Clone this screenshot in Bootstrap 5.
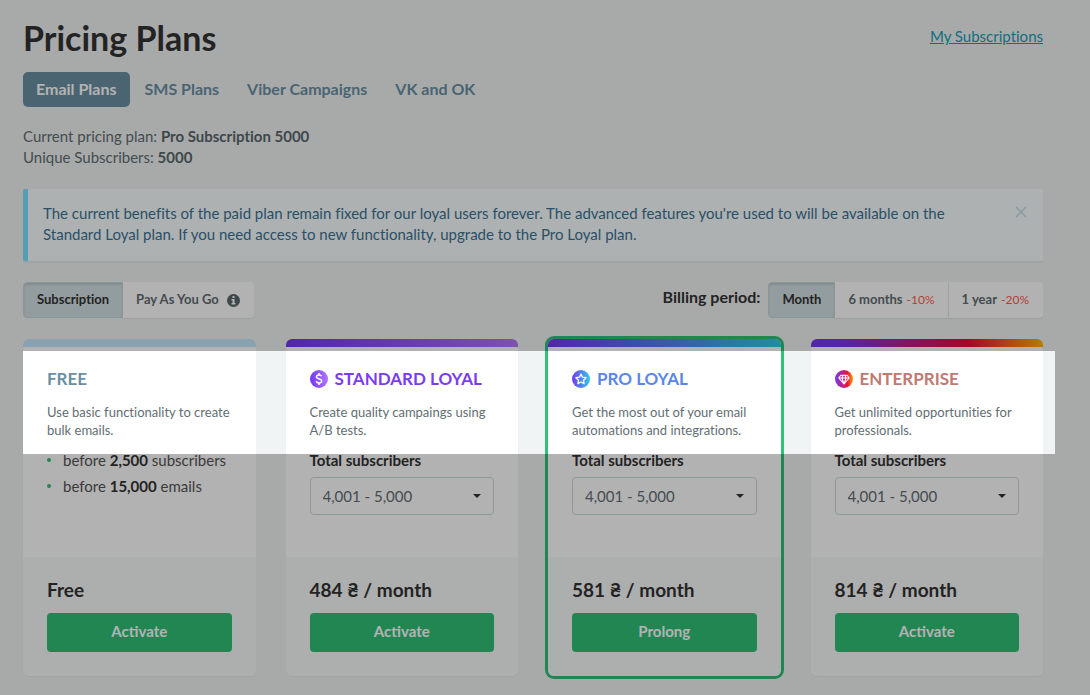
<!DOCTYPE html>
<html lang="en">
<head>
<meta charset="utf-8">
<meta name="viewport" content="width=device-width, initial-scale=1">
<title>Pricing Plans</title>
<link href="https://cdn.jsdelivr.net/npm/bootstrap@5.3.0/dist/css/bootstrap.min.css" rel="stylesheet">
<style>
:root { --brand-green: #31c178; --ink: #333; --muted: #626e73; --steel: #6a90a3; }
body { min-height: 100vh; font-family: Lato, "DejaVu Sans", sans-serif; font-variant-ligatures: none; font-size: 15px; line-height: 21px; color: var(--muted); background: #f1f4f4; overflow-x: hidden; }
.page { padding: 18px 47px 20px 23px; }
h1 { font-size: 34px; line-height: 40px; font-weight: 700; color: var(--ink); }
.sub-link { color: #17a0b5; }
.plan-tabs { gap: 2px; margin-top: 14px; }
.plan-tabs .nav-link { height: 35px; padding: 6px 13px; font-size: 16px; font-weight: 700; color: var(--steel); border-radius: 5px; }
.plan-tabs .nav-link.active { background: var(--steel); color: #fff; }
.summary { margin-top: 19px; }
.summary b { color: #5a666b; }
.notice { margin: 21px 0; padding: 14px 15px 16px; border: 0; border-left: 5px solid #78e2ff; border-radius: 2px; background: #f9feff; color: #3c7394; box-shadow: 0 2px 0 #e6eaea; }
.notice p { max-width: 930px; }
.close-x { width: 14px; height: 14px; color: #c5dbe6; margin-top: 2px; }
.toggle .btn { height: 36px; padding: 0 13px; display: flex; align-items: center; gap: 4px; font-size: 13px; font-weight: 700; color: var(--muted); background: #fff; border: 1px solid #fff; border-radius: 4px; box-shadow: 0 1px 1px #e0e4e4; }
.toggle .btn + .btn-check + .btn { border-left-color: #e3e8e9; }
.toggle .btn-check:checked + .btn { background: #d3e0e3; color: var(--ink); border-color: #c8d7da; box-shadow: inset 0 2px 2px #bccbce; }
.toggle small { font-size: 12px; font-weight: 400; color: #ff5a4d; }
.period-label { font-size: 16px; color: var(--ink); font-weight: 700; }
.plans-area { margin-top: 21px; }
.plans { --bs-gutter-x: 30px; }
.plan { border: 0; border-radius: 6px; color: var(--muted); box-shadow: 0 1px 1px #e6eaea; min-height: 337px; }
.plan.current { box-shadow: 0 0 0 3px var(--brand-green); }
.stripe { height: 8px; border-radius: 6px 6px 0 0; }
.stripe-free { background: #c6e8fd; }
.stripe-standard { background: linear-gradient(90deg, #7438f4, #b077f9); }
.stripe-pro { background: linear-gradient(90deg, #7438f4, #32cae6); }
.stripe-enterprise { background: linear-gradient(90deg, #7438f4 10%, #ee0a38 68%, #ffb400); }
.plan .card-body { padding: 22px 24px; }
.plan h2 { font-size: 17px; line-height: 20px; font-weight: 700; margin: 0 0 14px; display: flex; align-items: center; gap: 7px; }
.plan h2 svg { width: 18px; height: 18px; }
.name-free { color: var(--steel); } .name-standard { color: #7a3cf0; } .name-pro { color: #5a86ea; } .name-enterprise { color: #c07a72; }
.blurb { font-size: 13px; line-height: 18px; margin: 0 0 11px; min-height: 36px; }
.plan .form-label { display: block; margin: 0 0 6px; font-size: 15px; color: var(--ink); font-weight: 700; }
.plan .form-select { height: 38px; padding: 0 34px 0 12px; font-size: 15px; color: var(--muted); border: 1px solid #c9dcdc; border-radius: 4px; background: #fff url("data:image/svg+xml,%3Csvg xmlns='http://www.w3.org/2000/svg' viewBox='0 0 8 4'%3E%3Cpath d='M0 0h8L4 4z' fill='%23333'/%3E%3C/svg%3E") no-repeat right 12px center / 8px 4px; }
.limits { list-style: none; margin: -3px 0 0; padding: 0; line-height: 26px; color: #555; }
.limits li { display: flex; align-items: center; gap: 12px; }
.limits li::before { content: ""; width: 4px; height: 4px; border-radius: 50%; background: var(--brand-green); }
.limits b { color: var(--ink); }
.plan .card-footer { border: 0; padding: 21px 24px 24px; background: #f8fafa; border-radius: 0 0 6px 6px; }
.price { font-size: 19px; line-height: 24px; font-weight: 700; color: var(--ink); margin: 0 0 11px; }
.btn-plan { height: 39px; padding: 0 0 2px; font-size: 15px; font-weight: 700; color: #fff; background: var(--brand-green); border: 0; border-radius: 4px; }
/* Onboarding spotlight: dims everything except the plan headings */
.spotlight { position: absolute; z-index: 10; top: 12px; left: 0; right: -12px; height: 103px; box-shadow: 0 0 0 4000px rgba(0,0,0,.3); pointer-events: none; }
</style>
<script src="https://cdn.jsdelivr.net/npm/bootstrap@5.3.0/dist/js/bootstrap.bundle.min.js"></script>
</head>
<body>
<main class="page">
  <header class="d-flex justify-content-between align-items-start">
    <h1 class="m-0">Pricing Plans</h1>
    <a class="sub-link mt-2" href="#">My Subscriptions</a>
  </header>
  <nav class="nav nav-pills plan-tabs">
    <a class="nav-link active" href="#" aria-current="page">Email Plans</a>
    <a class="nav-link" href="#">SMS Plans</a>
    <a class="nav-link" href="#">Viber Campaigns</a>
    <a class="nav-link" href="#">VK and OK</a>
  </nav>
  <div class="summary">
    <div>Current pricing plan: <b>Pro Subscription 5000</b></div>
    <div>Unique Subscribers: <b>5000</b></div>
  </div>
  <div class="alert notice d-flex justify-content-between" role="alert">
    <p class="m-0">The current benefits of the paid plan remain fixed for our loyal users forever. The advanced features you're used to will be available on the Standard Loyal plan. If you need access to new functionality, upgrade to the Pro Loyal plan.</p>
    <button type="button" class="btn p-0 border-0 d-flex close-x" data-bs-dismiss="alert" aria-label="Close"><svg width="14" height="14" viewBox="0 0 14 14" fill="none" stroke="currentColor" stroke-width="1.5"><path d="M2 2l10 10M12 2L2 12"/></svg></button>
  </div>
  <div class="d-flex justify-content-between align-items-start">
    <div class="btn-group toggle" role="group" aria-label="Payment type">
      <input class="btn-check" type="radio" name="kind" id="kind-sub" checked><label class="btn" for="kind-sub">Subscription</label>
      <input class="btn-check" type="radio" name="kind" id="kind-payg"><label class="btn" for="kind-payg">Pay As You Go
        <svg class="ms-1" width="13" height="13" viewBox="0 0 13 13"><circle cx="6.500" cy="6.500" r="6.500" fill="#5a666b"/><path d="M5.500 2h2v2h-2zM4.500 5h3v4h1v1.500h-4V9h1V6.500h-1z" fill="#fff"/></svg></label>
    </div>
    <div class="d-flex align-items-start">
      <span class="period-label me-2 mt-1" id="period-label">Billing period:</span>
      <div class="btn-group toggle" role="group" aria-labelledby="period-label">
        <input class="btn-check" type="radio" name="period" id="p1" checked><label class="btn" for="p1">Month</label>
        <input class="btn-check" type="radio" name="period" id="p6"><label class="btn" for="p6">6 months <small>-10%</small></label>
        <input class="btn-check" type="radio" name="period" id="p12"><label class="btn" for="p12">1 year <small>-20%</small></label>
      </div>
    </div>
  </div>
  <div class="position-relative plans-area">
    <div class="row plans">
      <div class="col-3"><section class="card plan h-100">
        <div class="stripe stripe-free"></div>
        <div class="card-body">
          <h2 class="name-free">FREE</h2>
          <p class="blurb">Use basic functionality to create bulk emails.</p>
          <ul class="limits"><li><span>before <b>2,500</b> subscribers</span></li><li><span>before <b>15,000</b> emails</span></li></ul>
        </div>
        <div class="card-footer"><p class="price">Free</p><button type="button" class="btn btn-plan w-100">Activate</button></div>
      </section></div>
      <div class="col-3"><section class="card plan h-100">
        <div class="stripe stripe-standard"></div>
        <div class="card-body">
          <h2 class="name-standard"><svg viewBox="0 0 18 18"><defs><linearGradient id="gs"><stop stop-color="#7438f4"/><stop offset="1" stop-color="#b077f9"/></linearGradient></defs><circle cx="9" cy="9" r="9" fill="url(#gs)"/><path d="M11.600 6.300C11.200 5.300 10.300 4.900 9 4.900c-1.500 0-2.500.7-2.500 1.900 0 2.900 5.200 1.300 5.200 4.200 0 1.300-1.100 2-2.700 2-1.500 0-2.500-.6-2.800-1.700M9 3v2M9 13v2" fill="none" stroke="#fff" stroke-width="1.500"/></svg>STANDARD LOYAL</h2>
          <p class="blurb">Create quality campaings using A/B tests.</p>
          <label class="form-label" for="s1">Total subscribers</label>
          <select class="form-select" id="s1"><option>4,001 - 5,000</option></select>
        </div>
        <div class="card-footer"><p class="price">484 ₴ / month</p><button type="button" class="btn btn-plan w-100">Activate</button></div>
      </section></div>
      <div class="col-3"><section class="card plan current h-100">
        <div class="stripe stripe-pro"></div>
        <div class="card-body">
          <h2 class="name-pro"><svg viewBox="0 0 18 18"><defs><linearGradient id="gp"><stop stop-color="#7438f4"/><stop offset="1" stop-color="#32cae6"/></linearGradient></defs><circle cx="9" cy="9" r="9" fill="url(#gp)"/><path d="M9 4l1.500 3.200 3.600.5-2.600 2.500.6 3.500L9 12l-3.100 1.700.6-3.500L3.900 7.700l3.600-.5z" fill="none" stroke="#fff" stroke-width="1.300" stroke-linejoin="round"/></svg>PRO LOYAL</h2>
          <p class="blurb">Get the most out of your email automations and integrations.</p>
          <label class="form-label" for="s2">Total subscribers</label>
          <select class="form-select" id="s2"><option>4,001 - 5,000</option></select>
        </div>
        <div class="card-footer"><p class="price">581 ₴ / month</p><button type="button" class="btn btn-plan w-100">Prolong</button></div>
      </section></div>
      <div class="col-3"><section class="card plan h-100">
        <div class="stripe stripe-enterprise"></div>
        <div class="card-body">
          <h2 class="name-enterprise"><svg viewBox="0 0 18 18"><defs><linearGradient id="ge"><stop stop-color="#7438f4"/><stop offset=".7" stop-color="#ee1438"/><stop offset="1" stop-color="#ffa000"/></linearGradient></defs><circle cx="9" cy="9" r="9" fill="url(#ge)"/><path d="M5.800 5.200h6.400l2 2.800L9 14 3.800 8zM3.800 8h10.400M9 14L7 8l1-2.800M9 14l2-6-1-2.800" fill="none" stroke="#fff" stroke-width="1.100" stroke-linejoin="round"/></svg>ENTERPRISE</h2>
          <p class="blurb">Get unlimited opportunities for professionals.</p>
          <label class="form-label" for="s3">Total subscribers</label>
          <select class="form-select" id="s3"><option>4,001 - 5,000</option></select>
        </div>
        <div class="card-footer"><p class="price">814 ₴ / month</p><button type="button" class="btn btn-plan w-100">Activate</button></div>
      </section></div>
    </div>
    <div class="spotlight"></div>
  </div>
</main>
</body>
</html>
